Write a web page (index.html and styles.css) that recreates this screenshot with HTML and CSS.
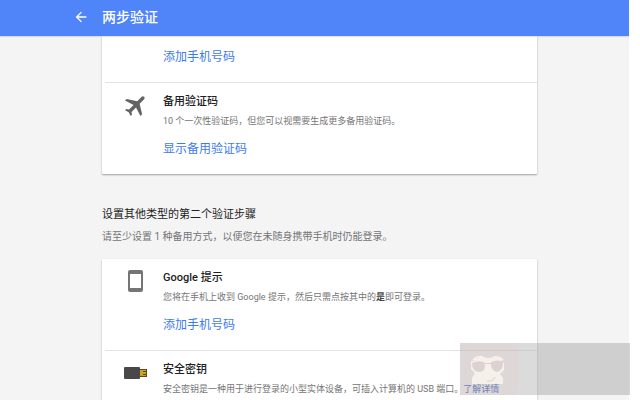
FILE: index.html
```html
<!DOCTYPE html>
<html lang="zh-CN">
<head>
<meta charset="utf-8">
<title>两步验证</title>
<link rel="stylesheet" href="styles.css">
</head>
<body>
<div class="page">
  <header class="topbar">
    <button class="back" type="button" aria-label="返回">
      <svg viewBox="0 0 24 24" width="16" height="16"><path fill="currentColor" d="M20 11H7.830l5.590-5.590L12 4l-8 8 8 8 1.410-1.410L7.830 13H20v-2z"/></svg>
    </button>
    <h1 class="title">两步验证</h1>
  </header>
  <main class="content">
    <section class="card card-continued">
      <div class="item item-continued">
        <div class="body"><a class="action" href="#">添加手机号码</a></div>
      </div>
      <div class="item">
        <svg class="icon" viewBox="0 0 24 24"><path fill="#636363" transform="translate(12 11) rotate(45) scale(1.150) translate(-11.500 -12)" d="M21 16v-2l-8-5V3.500c0-.83-.67-1.500-1.500-1.500S10 2.670 10 3.500V9l-8 5v2l8-2.500V19l-2 1.500V22l3.500-1 3.500 1v-1.500L13 19v-5.500l8 2.500z"/></svg>
        <div class="body">
          <h3 class="name">备用验证码</h3>
          <p class="desc">10 个一次性验证码，但您可以视需要生成更多备用验证码。</p>
          <a class="action" href="#">显示备用验证码</a>
        </div>
      </div>
    </section>
    <h2 class="section-title">设置其他类型的第二个验证步骤</h2>
    <p class="section-desc">请至少设置 1 种备用方式，以便您在未随身携带手机时仍能登录。</p>
    <section class="card">
      <div class="item">
        <svg class="icon" viewBox="0 0 24 24"><path fill="#757575" fill-rule="evenodd" d="M6 0h11a2 2 0 0 1 2 2v18a2 2 0 0 1-2 2H6a2 2 0 0 1-2-2V2a2 2 0 0 1 2-2zM6 4v14h11V4z"/></svg>
        <div class="body">
          <h3 class="name">Google 提示</h3>
          <p class="desc">您将在手机上收到 Google 提示，然后只需点按其中的<b>是</b>即可登录。</p>
          <a class="action" href="#">添加手机号码</a>
        </div>
      </div>
      <div class="item">
        <svg class="icon" viewBox="0 0 24 24"><rect x="0" y="5" width="16" height="12" rx="1" fill="#484848"/><path fill="#c9a227" d="M16 7h7v8h-7z"/><path fill="#5c4c1c" d="M16 7h7v1h-7zM16 14h7v1h-7zM19 9h3v1h-3zM19 12h3v1h-3zM22 7h1v8h-1z"/></svg>
        <div class="body">
          <h3 class="name">安全密钥</h3>
          <p class="desc">安全密钥是一种用于进行登录的小型实体设备，可插入计算机的 USB 端口。<a class="more" href="#">了解详情</a></p>
        </div>
      </div>
    </section>
  </main>
</div>
<div class="watermark" aria-hidden="true">
  <svg viewBox="0 0 170 52" width="170" height="52">
    <path fill="#c9aeae" fill-opacity=".55" d="M0 0h57l2 18-2 34H0z"/>
    <path fill="#fff" fill-opacity=".15" d="M57 0h20v52H57l2-34z"/>
    <path fill="#fff3e4" fill-opacity=".75" d="M12 17q5-5 10-4 3 2 6 2 4 0 7-2 6 0 9 4l-4 1 4 2v7l-4 4 3 4v6H12v-6l3-5-4-4v-8l5-1z"/>
    <path fill="#b9a2a2" d="M12 20q6-3 12-1 3 9-4 10-8 0-8-9zM31 19q6-3 12 0 0 9-6 10-7-2-6-10zM24 20h7v1h-7z"/>
    <path fill="none" stroke="#a99a96" d="M27 38q6 1 8-4"/>
  </svg>
</div>
</body>
</html>
```
FILE: styles.css
```css
* {
  box-sizing: border-box;
}

html {
  overflow: hidden;
  background: #fff;
}

body,
h1,
h2,
h3,
p {
  margin: 0;
}

body {
  font-family: Roboto, "Noto Sans CJK SC", sans-serif;
  color: #212121;
}

a {
  color: #3f7be8;
  text-decoration: none;
}

.page {
  min-height: 100vh;
  margin-right: 11px;
  background: #f4f4f4;
}

.topbar {
  position: sticky;
  top: 0;
  z-index: 1;
  display: flex;
  align-items: center;
  gap: 13px;
  height: 36px;
  padding: 0 73px 2px;
  background: #5085f9;
  color: #fff;
  box-shadow: 0 1px 1px rgba(0, 0, 0, 0.1);
}

.back {
  display: flex;
  padding: 0;
  border: 0;
  background: none;
  color: inherit;
}

.title {
  font-size: 14px;
  line-height: 20px;
  font-weight: 500;
}

.content {
  padding: 0 92px 0 102px;
}

.card {
  background: #fff;
  border-radius: 1px;
  box-shadow: 0 1px 2px rgba(0, 0, 0, 0.35);
}

.card-continued {
  border-radius: 0 0 1px 1px;
}

.item {
  display: grid;
  grid-template-columns: 22px 1fr;
  gap: 17px;
  padding: 11px 0 16px 22px;
}

.item + .item {
  margin-left: 3px;
  padding-left: 19px;
  border-top: 1px solid #e2e2e2;
}

.item-continued {
  padding-top: 12px;
}

.body {
  grid-column: 2;
}

.icon {
  width: 24px;
  height: 24px;
}

.name {
  font-size: 11px;
  line-height: 16px;
  font-weight: 500;
}

.desc {
  margin-top: 4px;
  font-size: 9px;
  line-height: 14px;
  color: #757575;
}

.desc b {
  color: #424242;
}

.action {
  display: block;
  width: fit-content;
  font-size: 12px;
  line-height: 18px;
}

.desc + .action {
  margin-top: 12px;
}

.more {
  color: #2a56c6;
}

.section-title {
  margin-top: 33px;
  font-size: 11px;
  line-height: 16px;
  font-weight: 400;
}

.section-desc {
  margin: 7px 0 15px;
  font-size: 10px;
  line-height: 14px;
  color: #757575;
}

.watermark {
  position: absolute;
  right: 10px;
  bottom: 5px;
  z-index: 2;
  display: flex;
  background: #a8a8a8;
  opacity: 0.48;
  pointer-events: none;
}
```
